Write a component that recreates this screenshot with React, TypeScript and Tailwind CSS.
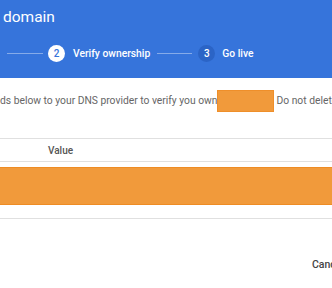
export default function App() {
  return (
    <div className="w-[332px] h-[288px] overflow-hidden bg-white font-['Roboto',sans-serif] relative">
      <div className="h-[78px] bg-[#3674db] text-white flex flex-col">
        <div className="pl-[3px] pt-[7px] text-[15.5px] leading-[20px]">domain</div>
        <div className="mt-[18px] flex items-center h-[17px] whitespace-nowrap">
          <span className="text-[10.3px] font-medium -ml-[4px] w-[4px] shrink-0 overflow-hidden">n</span>
          <div className="ml-[7px] w-[36px] shrink-0 h-px bg-white/40"></div>
          <div className="ml-[5px] w-[17px] h-[17px] shrink-0 rounded-full bg-white text-[#3674db] text-[10px] font-medium flex items-center justify-center">2</div>
          <span className="ml-[8px] text-[10.3px] font-medium">Verify ownership</span>
          <div className="ml-[7px] w-[35px] shrink-0 h-px bg-white/40"></div>
          <div className="ml-[6px] w-[17px] h-[17px] shrink-0 rounded-full bg-[#2b64c6] text-white text-[10px] font-medium flex items-center justify-center">3</div>
          <span className="ml-[7px] text-[10.3px] font-medium">Go live</span>
        </div>
      </div>
      <div className="mt-[12px] flex items-center whitespace-nowrap text-[10.3px] text-[#666] h-[22px]">
        <span className="shrink-0">ds below to your DNS provider to verify you own</span>
        <span className="shrink-0 inline-block w-[57px] h-[22px] bg-[#f19a3b] border border-[#ef8f2a]"></span>
        <span className="shrink-0 ml-[2px]">Do not delete</span>
      </div>
      <div className="mt-[26px] border-t border-[#e0e0e0] h-[24px] flex items-center border-b">
        <span className="ml-[48px] text-[10px] font-medium text-[#555]">Value</span>
      </div>
      <div className="mt-[5px] h-[38px] bg-[#f19a3b] border-y border-[#ee8c24]"></div>
      <div className="mt-[13px] border-t border-[#e0e0e0]"></div>
      <div className="mt-[38px] flex justify-start whitespace-nowrap">
        <span className="ml-[312px] text-[10.5px] font-medium text-[#444]">Cancel</span>
      </div>
    </div>
  );
}
